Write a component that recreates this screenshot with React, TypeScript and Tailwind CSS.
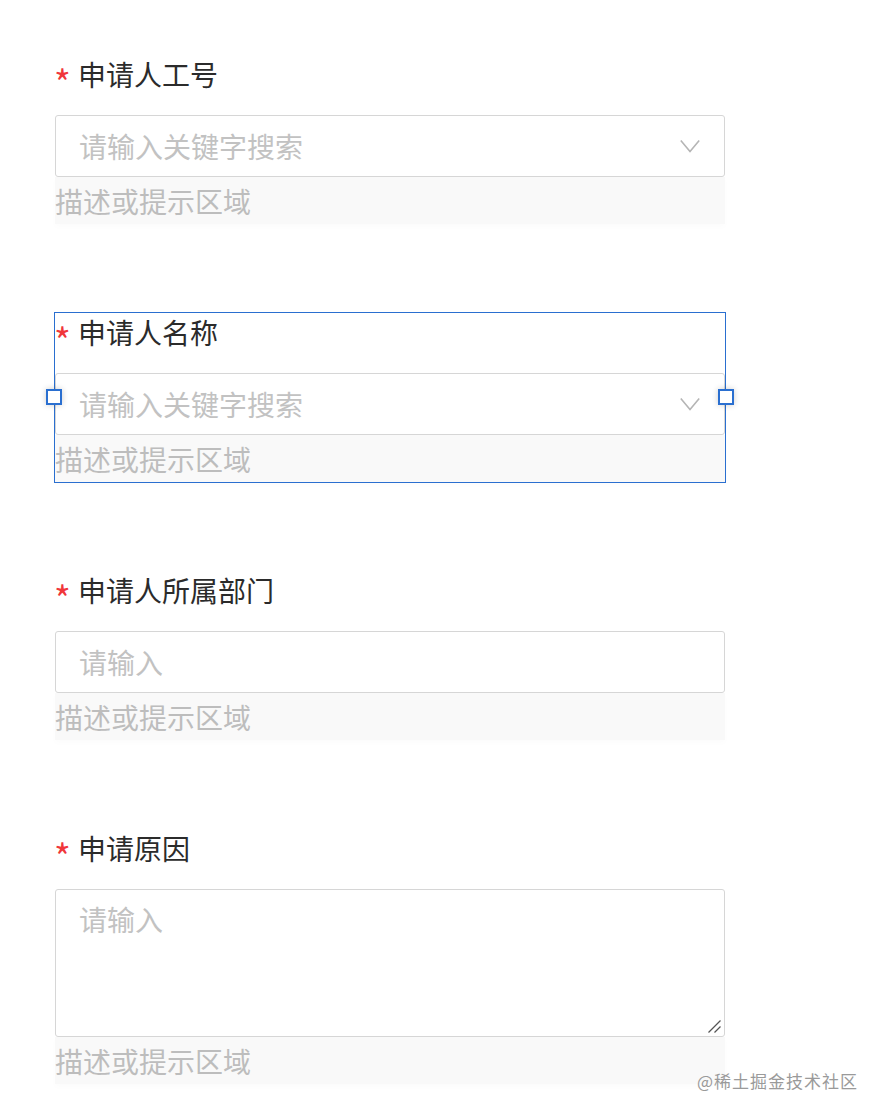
import React from "react";

const font = { fontFamily: '"Noto Sans CJK SC", "Noto Sans", sans-serif' };

function Chevron() {
  return (
    <svg width="20" height="14" viewBox="0 0 20 14" className="shrink-0">
      <path d="M0.8 1.5 L10 12.5 L19.2 1.5" fill="none" stroke="#b5b5b5" strokeWidth="1.6" />
    </svg>
  );
}

function Label({ text }: { text: string }) {
  return (
    <div className="flex h-[40px] items-center">
      <span className="w-[24px] text-[36px] leading-none text-[#f0363a] pt-[14px] -ml-[1px]">*</span>
      <span className="text-[28px] text-[#2b2b2b] leading-[40px]">{text}</span>
    </div>
  );
}

function Desc() {
  return (
    <div className="h-[47px] bg-[#f9f9f9] flex items-center text-[28px] text-[#bdbdbd] shadow-[0_3px_6px_rgba(0,0,0,0.015)]">
      描述或提示区域
    </div>
  );
}

function SelectBox() {
  return (
    <div className="h-[62px] border border-[#d6d6d6] rounded-[3px] bg-white flex items-center pl-[23px] pr-[24px] justify-between">
      <span className="text-[28px] text-[#c2c2c2]">请输入关键字搜索</span>
      <Chevron />
    </div>
  );
}

function InputBox() {
  return (
    <div className="h-[62px] border border-[#d6d6d6] rounded-[3px] bg-white flex items-center pl-[23px]">
      <span className="text-[28px] text-[#c2c2c2]">请输入</span>
    </div>
  );
}

function TextAreaBox() {
  return (
    <div className="relative h-[148px] border border-[#d6d6d6] rounded-[3px] bg-white pl-[23px] pt-[11px]">
      <span className="text-[28px] text-[#c2c2c2] leading-[36px]">请输入</span>
      <svg width="16" height="16" viewBox="0 0 16 16" className="absolute right-[2px] bottom-[2px]">
        <path d="M14.5 2.5 L2.5 14.5 M14.5 8.5 L8.5 14.5" stroke="#555" strokeWidth="1.3" fill="none" />
      </svg>
    </div>
  );
}

function Handle({ side }: { side: "left" | "right" }) {
  return (
    <div
      className={
        "absolute top-1/2 -translate-y-1/2 w-[16px] h-[16px] bg-white border-2 border-[#2a6fd0] shadow-[0_0_6px_rgba(0,0,0,0.2)] " +
        (side === "left" ? "-left-[9px]" : "-right-[9px]")
      }
    />
  );
}

export default function App() {
  return (
    <div className="relative min-h-[1120px] w-full bg-white" style={font}>
      <div className="w-[670px] ml-[55px] pt-[54px] flex flex-col gap-[88px]">
        <div className="flex flex-col">
          <Label text="申请人工号" />
          <div className="h-[21px]" />
          <SelectBox />
          <Desc />
        </div>

        <div className="relative flex flex-col">
          <Label text="申请人名称" />
          <div className="h-[21px]" />
          <SelectBox />
          <Desc />
          <div className="absolute -left-px -right-px top-0 -bottom-px border border-[#2a6fd0] pointer-events-none" />
          <Handle side="left" />
          <Handle side="right" />
        </div>

        <div className="flex flex-col">
          <Label text="申请人所属部门" />
          <div className="h-[21px]" />
          <InputBox />
          <Desc />
        </div>

        <div className="flex flex-col">
          <Label text="申请原因" />
          <div className="h-[21px]" />
          <TextAreaBox />
          <Desc />
        </div>
      </div>

      <div className="absolute left-[697px] top-[1069px] text-[17px] leading-[24px] text-[#9a9a9a] tracking-[1px]">
        @稀土掘金技术社区
      </div>
    </div>
  );
}
